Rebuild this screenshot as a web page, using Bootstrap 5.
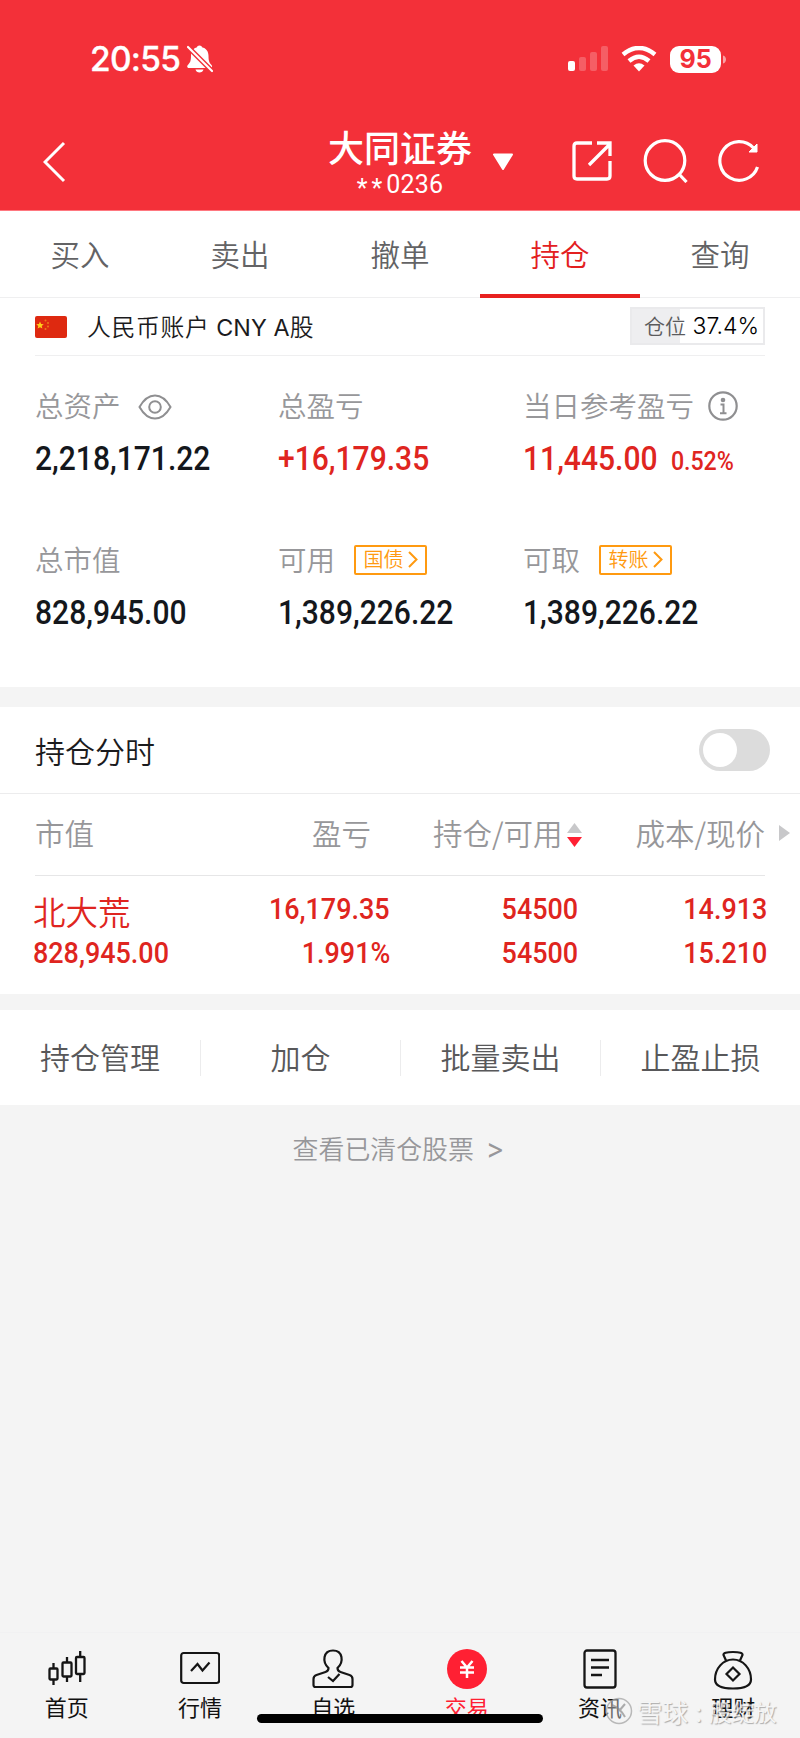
<!DOCTYPE html>
<html lang="zh-CN">
<head>
<meta charset="utf-8">
<meta name="viewport" content="width=device-width, initial-scale=1">
<title>持仓</title>
<link href="https://cdn.jsdelivr.net/npm/bootstrap@5.3.0/dist/css/bootstrap.min.css" rel="stylesheet">
<style>
body{font-family:"Noto Sans CJK SC",sans-serif;font-weight:350;background:#f4f4f4;color:#1b1b1d}
.app{width:800px;height:1738px;overflow:hidden}
svg{display:block;flex:none}
.top{background:#f33039;height:211px;border-bottom:1px solid #ff7880;color:#fff}
.status{height:118px;padding:0 73px 0 90px}
.clock{font:500 33.5px/40px Inter,sans-serif;letter-spacing:-.7px;-webkit-text-stroke:.3px #fff}
.batt{width:51px;height:27px;border-radius:9px;background:#fff;color:#f33039;font:700 25px/27px Inter,sans-serif;text-align:center}
.titlebar{height:92px;padding:0 40px 0 43px}
.title-name{font-size:36px;font-weight:500;line-height:36px}
.acct-no{font:400 25px/28px Roboto,sans-serif;height:28px;margin-top:7px;letter-spacing:.2px}
.acct-no span{letter-spacing:4px;vertical-align:-4px;line-height:1}
.tabs{height:87px;border-bottom:1px solid #efeff0}
.tabs .nav-link{height:87px;padding:0;line-height:85px;font-size:29.5px;color:#636365;border-bottom:4px solid transparent;border-radius:0}
.tabs .active{color:#e3201f;border-color:#e8211f}
.hair{height:1px;margin:0 35px;background:#efeff0}
.account{height:57px;padding:0 35px}
.acct-name{font-size:23.8px;margin:-2px 0 0 20px;letter-spacing:.7px}
.acct-name span{font:400 23.3px Inter,sans-serif;letter-spacing:.1px}
.pos{width:135px;height:38px;border:2px solid #eaeaec;background:linear-gradient(90deg,#eeeef0 48px,#fff 48px);margin-top:-1px;color:#5b5b5d;font-size:21px}
.pos b{font:300 23px/32px Inter,sans-serif;color:#000}
.pos span{line-height:30px;margin-top:-3px}
.asset{padding-left:35px;height:154px}
.lbl{font-size:28.5px;line-height:34px;height:40px;color:#97979a}
.lbl>span:first-child,.lbl>b{font-weight:350;margin-top:-5px}
.figure-num{font:500 33px/40px Roboto,sans-serif;transform:scaleX(.91);transform-origin:0 50%;display:inline-block;white-space:nowrap;color:#14171c}
.figure-num.r{transform-origin:100% 50%}
.up,.up .figure-num,.figure-num.up{color:#df2520}
.up .lbl{color:#97979a}
.s1{width:243px}.s2{width:245px}
.val{margin-top:12px}
.tag{border:2px solid #ff9a10;border-radius:2px;height:30px;width:73px;margin:-3px 0 0 19px;color:#ff9a10;font-size:20px}
.tag b{font-weight:350;line-height:26px;margin-top:-2px}
.gap-band{background:#f4f4f4}
.toggle{width:71px;height:42px;border-radius:21px;background:#dcdcdc;padding:4px}
.toggle i{display:block;width:34px;height:34px;border-radius:50%;background:#fff}
.thead-row{height:81px;color:#97979a;font-size:29.5px;padding:0 6px 0 35px}
.thead-row span{margin-top:-4px}
.holding{height:118px;padding:11px 33px 0 33px}
.holding .figure-num{font-size:29.6px;line-height:44px}
.holding .stock{font-size:32.5px;line-height:48px;height:44px}
.acts>div{height:95px;line-height:92px;font-size:30px;color:#58585a}
.acts>div+div::before{content:"";float:left;width:1px;height:36px;margin-top:30px;background:#ececed}
.cleared{height:91px;line-height:86px;font-size:25.9px;color:#97979a;text-align:center;padding-right:3px}
.cleared span{font:400 28px Inter,sans-serif;margin-left:12px}
.tabbar{height:106px;border-top:1px solid #f1f1f2;color:#111}
.tabbar .it{width:133.33px;padding-top:15px;font-size:22px;line-height:30px;font-weight:400}
.tabbar .it svg{margin:0 auto 1px}
.homebar{left:257px;top:1714px;width:286px;height:9px;border-radius:5px;background:#000}
.wm{left:605px;top:1693px;height:36px;line-height:36px;font-size:25.5px;color:#f6f6f6;font-weight:400;text-shadow:1px 1px 1px #999;opacity:.8}
.wm em{font-style:normal;font-size:22.500px}
</style>
</head>
<body>
<div class="app position-relative d-flex flex-column">
<header class="top">
  <div class="status d-flex align-items-center">
    <span class="clock">20:55</span>
    <svg style="margin-left:7px" width="26" height="28" viewBox="0 0 26 28"><path d="M12.500.5c1.500 0 2.300.8 2.500 1.800 4 1 6.500 4 6.500 8.500 0 6 1 7 3 9.200 1.200 1.500.5 3-1.200 3H2C.3 23-.4 21.500.8 20 3 17.700 4 16.500 4 10.800 4 6.300 6.500 3.300 10 2.300 10.200 1.300 11 .5 12.500.5ZM8.500 24.500h8c-.5 2-2 3-4 3s-3.500-1-4-3Z" fill="#fff"/><path d="m1 2 24 24" stroke="#f33039" stroke-width="5"/><path d="m1 2 24 24" stroke="#fff" stroke-width="2.200" stroke-linecap="round"/></svg>
    <svg class="ms-auto" width="40" height="26" viewBox="0 0 40 26"><g fill="#fff"><rect y="15" width="7" height="10" rx="2"/><g opacity=".22"><rect x="11" y="11" width="7" height="14" rx="2"/><rect x="22" y="6" width="7" height="19" rx="2"/><rect x="33" width="7" height="25" rx="2"/></g></g></svg>
    <svg style="margin:0 13px" width="36" height="26" viewBox="0 0 36 26"><g fill="none" stroke="#fff" stroke-width="4.500"><path d="M2 8.500q16-13 32 0"/><path d="M8 15q10-8.500 20 0"/></g><path d="M12.500 19.500q5.500-4.500 11 0L18 25.500Z" fill="#fff"/></svg>
    <div class="batt">95</div>
    <svg width="6" height="27" viewBox="0 0 6 27"><path d="M2 9.500c4 1 4 7 0 8Z" fill="#fff" opacity=".55"/></svg>
  </div>
  <div class="titlebar d-flex align-items-center">
    <svg style="margin-top:-5px" width="24" height="42" viewBox="0 0 24 42"><path d="M21 2 2 21l19 19" fill="none" stroke="#fff" stroke-width="3"/></svg>
    <div class="text-center" style="width:144px;margin:-2px 0 0 261px"><div class="title-name">大同证券</div><div class="acct-no text-nowrap"><span>**</span>0236</div></div>
    <svg style="margin:-5px 0 0 20px" width="22" height="18" viewBox="0 0 22 18"><path d="M2 1.500h18L11 16Z" fill="#fff" stroke="#fff" stroke-width="2" stroke-linejoin="round"/></svg>
    <svg class="ms-auto" style="margin-top:-6px" width="42" height="42" viewBox="0 0 42 42"><path d="M21 3H6Q3 3 3 6v30q0 3 3 3h30q3 0 3-3V21M18 25 38 5M26 3h13v13" fill="none" stroke="#fff" stroke-width="3.300"/></svg>
    <svg style="margin:-6px 0 0 30px" width="45" height="44" viewBox="0 0 45 44"><g fill="none" stroke="#fff" stroke-width="3.200"><circle cx="22" cy="21.500" r="19.800"/><path d="m35.500 34.500 8 8.500"/></g></svg>
    <svg style="margin:-6px 0 0 30px" width="42" height="44" viewBox="0 0 42 44"><path d="M39.500 28A19.300 19.300 0 1 1 35.500 9" fill="none" stroke="#fff" stroke-width="3.200"/><path d="M39 5v8h-8Z" fill="#fff" stroke="#fff"/></svg>
  </div>
</header>
<main class="bg-white">
  <nav class="tabs nav nav-fill flex-nowrap">
    <a class="nav-link col">买入</a><a class="nav-link col">卖出</a><a class="nav-link col">撤单</a><a class="nav-link col active">持仓</a><a class="nav-link col">查询</a>
  </nav>
  <div class="account d-flex align-items-center">
    <svg width="32" height="22" viewBox="0 0 32 22"><rect width="32" height="22" rx="2" fill="#de2910"/><path d="m5 5.500 1.100 2.500 2.700.2-2.100 1.800.7 2.600L5 11.200l-2.400 1.400.7-2.600-2.100-1.800 2.700-.2Z" fill="#ffce1a"/><g fill="#ec7a1a"><circle cx="10.500" cy="4.500" r="1"/><circle cx="13" cy="7" r="1"/><circle cx="13" cy="10.500" r="1"/><circle cx="10.500" cy="13" r="1"/></g></svg>
    <div class="acct-name">人民币账户<span> CNY A</span>股</div>
    <div class="pos ms-auto d-flex align-items-center justify-content-between ps-2 pe-1"><span class="ms-1">仓位</span><b>37.4%</b></div>
  </div>
  <div class="hair"></div>
  <section style="height:331px;padding-top:31px">
    <div class="asset d-flex">
      <div class="s1"><div class="lbl d-flex align-items-center"><span>总资产</span><svg style="margin-left:17px;margin-top:-1px" width="34" height="26" viewBox="0 0 34 26"><g fill="none" stroke="#8f8f91" stroke-width="2"><path d="M1.500 13Q8 1.500 17 1.500T32.500 13Q26 24.500 17 24.500T1.500 13Z"/><circle cx="17" cy="13" r="5.800"/></g></svg></div><div class="val"><span class="figure-num">2,218,171.22</span></div></div>
      <div class="s2 up"><div class="lbl d-flex align-items-center"><span>总盈亏</span></div><div class="val"><span class="figure-num">+16,179.35</span></div></div>
      <div class="up"><div class="lbl d-flex align-items-center"><span>当日参考盈亏</span><svg style="margin-left:14px;margin-top:-2px" width="30" height="30" viewBox="0 0 30 30"><circle cx="15" cy="15" r="13.700" fill="none" stroke="#8f8f91" stroke-width="2.200"/><circle cx="15" cy="9" r="2.300" fill="#8f8f91"/><path d="M12.500 13.500h3V22M12 22.200h6.500" fill="none" stroke="#8f8f91" stroke-width="2"/></svg></div><div class="text-nowrap val"><span class="figure-num">11,445.00</span><span class="figure-num" style="font-size:25.5px;letter-spacing:-.1px">0.52%</span></div></div>
    </div>
    <div class="asset d-flex">
      <div class="s1"><div class="lbl d-flex align-items-center"><span>总市值</span></div><div class="val"><span class="figure-num">828,945.00</span></div></div>
      <div class="s2"><div class="lbl d-flex align-items-center"><span>可用</span><span class="tag d-flex align-items-center justify-content-center"><b>国债</b><svg class="ms-1" width="10" height="17" viewBox="0 0 10 17"><path d="m1 1 7.500 7.500L1 16" fill="none" stroke="#ff9a10" stroke-width="2"/></svg></span></div><div class="val"><span class="figure-num">1,389,226.22</span></div></div>
      <div><div class="lbl d-flex align-items-center"><span>可取</span><span class="tag d-flex align-items-center justify-content-center"><b>转账</b><svg class="ms-1" width="10" height="17" viewBox="0 0 10 17"><path d="m1 1 7.500 7.500L1 16" fill="none" stroke="#ff9a10" stroke-width="2"/></svg></span></div><div class="val"><span class="figure-num">1,389,226.22</span></div></div>
    </div>
  </section>
  <div class="gap-band" style="height:20px"></div>
  <div class="d-flex align-items-center justify-content-between" style="height:87px;padding:0 30px 0 35px;border-bottom:1px solid #ececed;font-size:30px"><span>持仓分时</span><span class="toggle"><i></i></span></div>
  <div class="thead-row d-flex align-items-center">
    <span style="width:277px">市值</span><span style="width:121px">盈亏</span><span>持仓/可用</span>
    <svg style="margin-left:4px" width="15" height="24" viewBox="0 0 15 24"><path d="M0 10 7.500 0 15 10Z" fill="#c8c8ca"/><path d="M0 14h15L7.500 24Z" fill="#ff2033"/></svg>
    <span class="ms-auto">成本/现价</span>
    <svg style="margin:-3px 4px 0 14px" width="11" height="16" viewBox="0 0 11 16"><path d="m0 0 11 8-11 8Z" fill="#c8c8ca"/></svg>
  </div>
  <div class="hair" style="background:#e6e6e7"></div>
  <div class="holding d-flex up">
    <div style="width:200px"><div class="stock">北大荒</div><span class="figure-num">828,945.00</span></div>
    <div class="text-end" style="width:157px"><span class="figure-num r">16,179.35</span><br><span class="figure-num r">1.991%</span></div>
    <div class="text-end" style="width:188px"><span class="figure-num r">54500</span><br><span class="figure-num r">54500</span></div>
    <div class="text-end flex-fill"><span class="figure-num r">14.913</span><br><span class="figure-num r">15.210</span></div>
  </div>
  <div class="gap-band" style="height:16px"></div>
  <div class="acts d-flex text-center"><div class="col">持仓管理</div><div class="col">加仓</div><div class="col">批量卖出</div><div class="col">止盈止损</div></div>
</main>
<div class="cleared">查看已清仓股票<span>&gt;</span></div>
<footer class="tabbar d-flex text-center mt-auto">
  <div class="it"><svg width="40" height="42" viewBox="0 0 40 42"><g fill="none" stroke="#151515" stroke-width="2.300"><rect x="2.500" y="20.500" width="8" height="11" rx="1"/><path d="M6.500 15v5M6.500 32v5"/><rect x="15.500" y="14.500" width="9" height="14" rx="1"/><path d="M20 9v5M20 29v5"/><rect x="29" y="9" width="8.500" height="17" rx="1"/><path d="M33.200 3v6M33.200 26v8"/></g></svg>首页</div>
  <div class="it"><svg width="40" height="42" viewBox="0 0 40 42"><g fill="none" stroke="#151515" stroke-width="2.200"><rect x="1.200" y="5" width="38" height="30" rx="2.500"/><path d="m11 23 6.500-7 5 6.500 7-8"/></g></svg>行情</div>
  <div class="it"><svg width="42" height="42" viewBox="0 0 42 42"><g fill="none" stroke="#151515" stroke-width="2.200"><path d="M16.500 20C10 14 11 2.500 21 2.500s11 11.500 4.500 17.500q0 3 3 4l9 3q3 1 3 4v6q0 2-2 2h-35q-2 0-2-2v-6q0-3 3-4l9-3q3-1 3-4Z"/><path d="m16 29 5 4 6.500-7"/></g></svg>自选</div>
  <div class="it" style="color:#ff2033"><svg width="42" height="42" viewBox="0 0 42 42"><circle cx="21" cy="21" r="20" fill="#ff2033"/><path d="m15.500 13 5.500 6.500 5.500-6.500M14 19.500h14M14 24.500h14M21 19v11" fill="none" stroke="#fff" stroke-width="2.500"/></svg>交易</div>
  <div class="it"><svg width="42" height="42" viewBox="0 0 42 42"><g fill="none" stroke="#151515" stroke-width="2.300"><rect x="5.500" y="2.500" width="31" height="37" rx="2.500"/><path d="M12 12h18M12 19.500h18M12 27h11"/></g></svg>资讯</div>
  <div class="it"><svg width="42" height="42" viewBox="0 0 42 42"><g fill="none" stroke="#151515" stroke-width="2.200"><path d="M14 12.500 11.500 7Q11 4 21 4t9.500 3L28 12.500"/><path d="M21 11.500c-10 0-18 9-18 20q0 9 18 9t18-9c0-11-8-20-18-20Z"/><path d="m21 19.500 6.500 6.500-6.500 6.500-6.500-6.500Z"/></g></svg>理财</div>
</footer>
<div class="homebar position-absolute"></div>
<div class="wm position-absolute d-flex align-items-center text-nowrap"><svg class="me-1" width="28" height="28" viewBox="0 0 28 28"><circle cx="14" cy="14" r="12.500" fill="#f4f4f5" fill-opacity=".5" stroke="#aaa" stroke-width="1.500"/><path d="M7 8q8 3 13 12M20 7l-6 7" stroke="#999" stroke-width="2" fill="none"/></svg>雪球<span style="width:21px;padding-left:7px">:</span><em>股绽放</em></div>
</div>
<script src="https://cdn.jsdelivr.net/npm/bootstrap@5.3.0/dist/js/bootstrap.bundle.min.js"></script>
</body>
</html>
